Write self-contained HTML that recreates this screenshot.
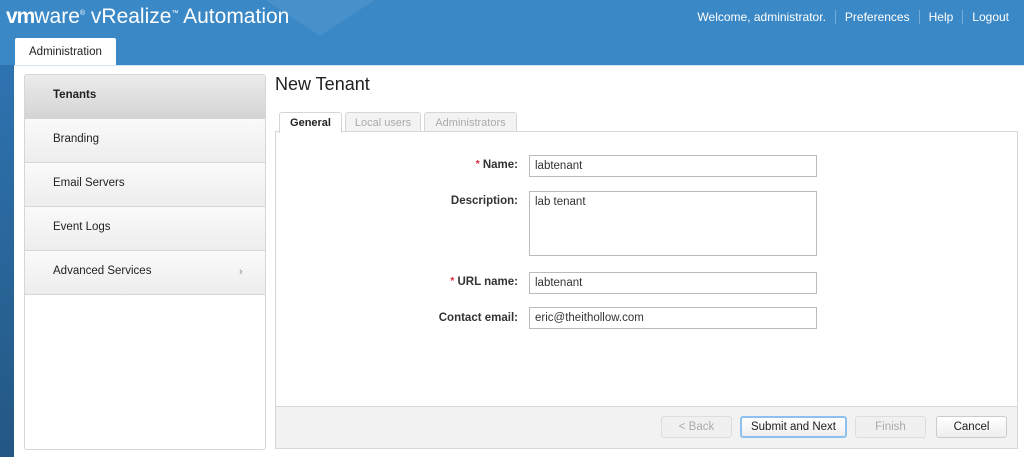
<!DOCTYPE html>
<html><head><style>
*{margin:0;padding:0;box-sizing:border-box}
body{width:1024px;height:457px;overflow:hidden;font-family:"Liberation Sans",sans-serif;background:linear-gradient(#2f78b8,#245783);position:relative}
.hdr{position:absolute;left:0;top:0;width:1024px;height:65px;background:#3a88c6;overflow:hidden}
.tri{position:absolute;left:250px;top:-10px;width:0;height:0;border-left:70px solid transparent;border-right:70px solid transparent;border-top:46px solid rgba(255,255,255,.07)}
.logo{position:absolute;left:6px;top:5px;color:#fff;font-size:21px;letter-spacing:0}
.top{position:absolute;right:6px;top:10px;color:#fff;font-size:12px}
.top span{padding:0 9px;border-left:1px solid rgba(255,255,255,.3)}
.top span:first-child{border:none}
.tab{position:absolute;left:15px;top:38px;width:101px;height:27px;background:#fff;border-radius:2px 2px 0 0;font-size:11.5px;color:#222;padding:8px 0 0 14px}
.main{position:absolute;left:14px;top:65px;width:1010px;height:392px;background:#fff;border-top:1px solid #cfe6f5}
.side{position:absolute;left:24px;top:74px;width:242px;height:376px;border:1px solid #d6d6d6;border-radius:3px;background:#fff;overflow:hidden}
.it{height:44px;border-bottom:1px solid #d6d6d6;background:linear-gradient(#fafafa,#ededed);font-size:11.5px;color:#222;padding:14px 0 0 28px;position:relative}
.it.a{background:linear-gradient(#ececec,#d4d4d4);font-weight:bold}
h1{position:absolute;left:275px;top:74px;font-size:18px;font-weight:normal;color:#222}
.t{position:absolute;top:112px;height:20px;border:1px solid #d6d6d6;border-bottom:none;border-radius:3px 3px 0 0;font-size:11px;color:#aaa;background:#f3f3f3;padding:4px 0 0;text-align:center;white-space:nowrap}
.panel{position:absolute;left:275px;top:131px;width:743px;height:318px;border:1px solid #d6d6d6;background:#fff}
.foot{position:absolute;left:0;bottom:0;width:100%;height:42px;background:#f2f2f2;border-top:1px solid #d6d6d6}
.lbl{position:absolute;font-size:11.5px;font-weight:bold;color:#333;text-align:right;width:200px}
.lbl i{color:#d23;font-style:normal;font-size:10px;vertical-align:top}
.in{position:absolute;left:529px;width:288px;height:22px;border:1px solid #bbb;font-size:11.5px;color:#333;padding:4px 0 0 5px;background:#fff}
.b{position:absolute;top:416px;height:22px;border:1px solid #ccc;border-radius:3px;font-size:11.5px;text-align:center;padding-top:4px;background:linear-gradient(#fff,#eee);color:#222}
.b.d{color:#aaa;background:#f0f0f0;border-color:#ddd}
</style></head><body>
<div class="hdr"><div class="tri"></div><div class="logo"><b style="font-weight:bold;letter-spacing:-1px">vm</b>ware<sup style="font-size:7px">®</sup> vRealize<sup style="font-size:7px">™</sup> Automation</div>
<div class="top"><span>Welcome, administrator.</span><span>Preferences</span><span>Help</span><span>Logout</span></div>
<div class="tab">Administration</div></div>
<div class="main"></div>
<div class="side">
<div class="it a">Tenants</div><div class="it">Branding</div><div class="it">Email Servers</div><div class="it">Event Logs</div><div class="it">Advanced Services<span style="position:absolute;left:214px;top:15px;color:#888;font-size:11px">›</span></div>
</div>
<h1>New Tenant</h1>
<div class="t" style="left:279px;width:63px;background:#fff;color:#222;font-weight:bold;height:21px;z-index:2">General</div>
<div class="t" style="left:345px;width:76px">Local users</div>
<div class="t" style="left:424px;width:93px">Administrators</div>
<div class="panel"><div class="foot"></div></div>
<div class="lbl" style="left:318px;top:159px"><i>*</i> Name:</div>
<div class="in" style="top:155px">labtenant</div>
<div class="lbl" style="left:318px;top:195px">Description:</div>
<div class="in" style="top:191px;height:65px">lab tenant</div>
<div class="lbl" style="left:318px;top:276px"><i>*</i> URL name:</div>
<div class="in" style="top:272px">labtenant</div>
<div class="lbl" style="left:318px;top:312px">Contact email:</div>
<div class="in" style="top:307px">eric@theithollow.com</div>
<div class="b d" style="left:661px;width:71px">&lt; Back</div>
<div class="b" style="left:740px;width:107px;border:2px solid #8cc1ee;padding-top:3px">Submit and Next</div>
<div class="b d" style="left:855px;width:71px">Finish</div>
<div class="b" style="left:936px;width:71px">Cancel</div>
</body></html>
